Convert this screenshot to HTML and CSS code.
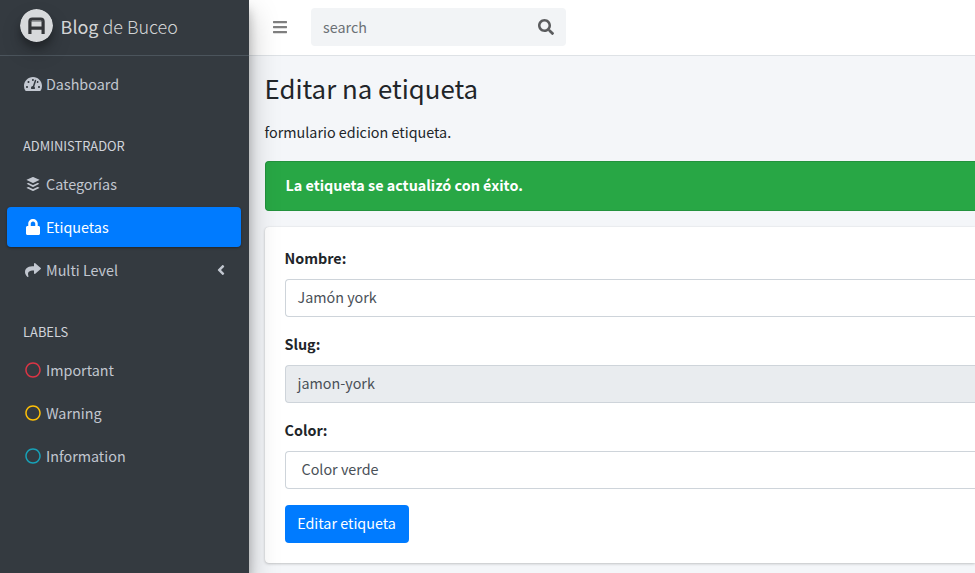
FILE: index.html
```html
<!DOCTYPE html>
<html lang="es">
<head>
<meta charset="utf-8">
<title>Blog de Buceo</title>
<link rel="stylesheet" href="styles.css">
</head>
<body>
<div class="wrapper">
  <aside class="sidebar">
    <a class="brand">
      <svg class="brand-logo" viewBox="0 0 33 33"><circle cx="16.5" cy="16.5" r="16.5" fill="#d7d9db"/><path d="M9.9 24.9V12.4q0-2.4 2.4-2.4h8.4q2.4 0 2.4 2.4v12.5M9.900 19.100h13.200" fill="none" stroke="#343639" stroke-width="3.2"/><path d="M10 12.2h13" stroke="#55585b" stroke-width=".7"/></svg>
      <span class="brand-text"><b>Blog</b> de Buceo</span>
    </a>
    <nav class="nav">
      <a class="nav-link"><svg class="icon" viewBox="0 0 576 512"><path d="M288 32C128.94 32 0 160.94 0 320c0 52.8 14.25 102.26 39.06 144.8 5.61 9.62 16.3 15.2 27.44 15.2h443c11.14 0 21.83-5.58 27.44-15.2C561.75 422.26 576 372.8 576 320c0-159.06-128.94-288-288-288zm0 64c14.71 0 26.58 10.13 30.32 23.65-1.11 2.26-2.64 4.23-3.45 6.67l-9.22 27.67c-5.13 3.49-10.97 6.01-17.64 6.01-17.67 0-32-14.33-32-32S270.33 96 288 96zM96 384c-17.67 0-32-14.33-32-32s14.33-32 32-32 32 14.33 32 32-14.33 32-32 32zm48-160c-17.67 0-32-14.33-32-32s14.33-32 32-32 32 14.33 32 32-14.33 32-32 32zm246.77-72.41l-61.33 184C343.13 347.33 352 364.54 352 384c0 11.72-3.38 22.55-8.88 32H232.88c-5.5-9.45-8.88-20.28-8.88-32 0-33.94 26.5-61.43 59.9-63.59l61.34-184.01c4.17-12.56 17.73-19.45 30.36-15.17 12.57 4.19 19.35 17.79 15.17 30.36zm14.66 57.2l15.52-46.55c3.47-1.29 7.13-2.23 11.05-2.23 17.67 0 32 14.33 32 32s-14.33 32-32 32c-11.38-.01-20.89-6.28-26.57-15.22zM480 384c-17.67 0-32-14.33-32-32s14.33-32 32-32 32 14.33 32 32-14.33 32-32 32z"/></svg><span>Dashboard</span></a>
      <div class="nav-header">ADMINISTRADOR</div>
      <a class="nav-link"><svg class="icon" viewBox="0 0 448 512"><path d="M427.84 380.67l-196.5 97.82a18.6 18.6 0 0 1-14.67 0L20.16 380.67c-4-2-4-5.28 0-7.29L67.22 350a18.65 18.65 0 0 1 14.69 0l134.76 67a18.51 18.51 0 0 0 14.67 0l134.76-67a18.62 18.62 0 0 1 14.68 0l47.06 23.43c4.05 1.96 4.05 5.24 0 7.24zm0-136.53l-47.06-23.43a18.62 18.62 0 0 0-14.68 0l-134.76 67.08a18.68 18.68 0 0 1-14.67 0L81.91 220.71a18.65 18.65 0 0 0-14.69 0l-47.06 23.43c-4 2-4 5.29 0 7.31l196.51 97.8a18.6 18.6 0 0 0 14.67 0l196.5-97.8c4.05-2.02 4.05-5.3 0-7.31zM20.16 130.42l196.5 90.29a20.08 20.08 0 0 0 14.67 0l196.51-90.29c4-1.86 4-4.89 0-6.74L231.33 33.4a19.88 19.88 0 0 0-14.67 0l-196.5 90.28c-4.05 1.85-4.05 4.88 0 6.74z"/></svg><span>Categorías</span></a>
      <a class="nav-link active"><svg class="icon" viewBox="0 0 448 512"><path d="M400 224h-24v-72C376 68.2 307.8 0 224 0S72 68.2 72 152v72H48c-26.5 0-48 21.5-48 48v192c0 26.5 21.5 48 48 48h352c26.5 0 48-21.5 48-48V272c0-26.5-21.5-48-48-48zm-104 0H152v-72c0-39.7 32.3-72 72-72s72 32.3 72 72v72z"/></svg><span>Etiquetas</span></a>
      <a class="nav-link"><svg class="icon" viewBox="0 0 512 512"><path d="M503.691 189.836L327.687 37.851C312.281 24.546 288 35.347 288 56.015v80.053C127.371 137.907 0 170.1 0 322.326c0 61.441 39.581 122.309 83.333 154.132 13.653 9.931 33.111-2.533 28.077-18.631C66.066 312.814 132.917 274.316 288 272.085V360c0 20.7 24.3 31.453 39.687 18.164l176.004-152c11.071-9.562 11.086-26.753 0-36.328z"/></svg><span>Multi Level</span><svg class="caret" viewBox="0 0 256 512"><path d="M31.7 239l136-136c9.4-9.4 24.6-9.4 33.9 0l22.600 22.600c9.400 9.400 9.400 24.600 0 33.900L127.900 256l96.400 96.400c9.400 9.400 9.400 24.600 0 33.900L201.700 409c-9.400 9.400-24.600 9.400-33.900 0l-136-136c-9.500-9.400-9.500-24.600-.1-34z"/></svg></a>
      <div class="nav-header">LABELS</div>
      <a class="nav-link"><svg class="icon danger" viewBox="0 0 512 512"><path d="M256 8C119 8 8 119 8 256s111 248 248 248 248-111 248-248S393 8 256 8zm0 448c-110.500 0-200-89.500-200-200S145.500 56 256 56s200 89.500 200 200-89.500 200-200 200z"/></svg><span>Important</span></a>
      <a class="nav-link"><svg class="icon warning" viewBox="0 0 512 512"><path d="M256 8C119 8 8 119 8 256s111 248 248 248 248-111 248-248S393 8 256 8zm0 448c-110.500 0-200-89.500-200-200S145.500 56 256 56s200 89.500 200 200-89.500 200-200 200z"/></svg><span>Warning</span></a>
      <a class="nav-link"><svg class="icon info" viewBox="0 0 512 512"><path d="M256 8C119 8 8 119 8 256s111 248 248 248 248-111 248-248S393 8 256 8zm0 448c-110.500 0-200-89.500-200-200S145.500 56 256 56s200 89.500 200 200-89.500 200-200 200z"/></svg><span>Information</span></a>
    </nav>
  </aside>
  <div class="main">
    <header class="navbar">
      <svg class="bars" viewBox="0 0 448 512"><path d="M16 132h416c8.837 0 16-7.163 16-16V76c0-8.837-7.163-16-16-16H16C7.163 60 0 67.163 0 76v40c0 8.837 7.163 16 16 16zm0 160h416c8.837 0 16-7.163 16-16v-40c0-8.837-7.163-16-16-16H16c-8.837 0-16 7.163-16 16v40c0 8.837 7.163 16 16 16zm0 160h416c8.837 0 16-7.163 16-16v-40c0-8.837-7.163-16-16-16H16c-8.837 0-16 7.163-16 16v40c0 8.837 7.163 16 16 16z"/></svg>
      <div class="search"><span>search</span><svg viewBox="0 0 512 512"><path d="M505 442.700L405.300 343c-4.500-4.500-10.600-7-17-7H372c27.600-35.300 44-79.700 44-128C416 93.100 322.900 0 208 0S0 93.100 0 208s93.100 208 208 208c48.300 0 92.700-16.400 128-44v16.300c0 6.400 2.500 12.500 7 17l99.700 99.700c9.400 9.400 24.600 9.400 33.900 0l28.300-28.300c9.400-9.400 9.400-24.600.1-34zM208 336c-70.700 0-128-57.200-128-128 0-70.700 57.200-128 128-128 70.700 0 128 57.200 128 128 0 70.700-57.200 128-128 128z"/></svg></div>
    </header>
    <main class="content">
      <h1>Editar na etiqueta</h1>
      <p>formulario edicion etiqueta.</p>
      <div class="alert"><strong>La etiqueta se actualizó con éxito.</strong></div>
      <form class="card">
        <label>Nombre:</label>
        <div class="control">Jamón york</div>
        <label>Slug:</label>
        <div class="control readonly">jamon-york</div>
        <label>Color:</label>
        <div class="control select">Color verde</div>
        <button class="btn" type="button">Editar etiqueta</button>
      </form>
    </main>
  </div>
</div>
</body>
</html>
```
FILE: styles.css
```css
* { box-sizing: border-box; }
body {
  margin: 0;
  overflow: hidden;
  font: 400 14.35px/24px "Source Sans Pro", "Noto Sans CJK SC", sans-serif;
  color: #212529;
  background: #f4f6f9;
}
svg { display: block; fill: currentColor; flex: none; }
.wrapper { display: flex; height: 573px; }
.sidebar {
  position: relative;
  z-index: 2;
  flex: none;
  width: 249px;
  background: #343a40;
  color: #c2c7d0;
  box-shadow: 0 14px 28px rgba(0,0,0,.25), 0 10px 10px rgba(0,0,0,.22);
}
.brand {
  display: flex;
  align-items: center;
  gap: 7.6px;
  height: 56px;
  padding: 0 8px 4px 20px;
  border-bottom: 1px solid #4b545c;
  font-size: 17.95px;
  font-weight: 300;
  color: rgba(255,255,255,.8);
}
.brand-logo {
  width: 33px;
  height: 33px;
  border-radius: 50%;
  box-shadow: 0 10px 20px rgba(0,0,0,.19), 0 6px 6px rgba(0,0,0,.23);
}
.brand-text { padding-top: 1px; white-space: nowrap; }
.brand b { font-weight: 400; }
.nav { padding: 8px 8px 0 7px; }
.nav-link {
  display: flex;
  align-items: center;
  height: 40px;
  margin-bottom: 3px;
  padding: 0 16px;
  border-radius: 4px;
}
.nav-link span { margin-left: 3px; }
.active {
  background: #007bff;
  color: #fff;
  box-shadow: 0 1px 3px rgba(0,0,0,.12), 0 1px 2px rgba(0,0,0,.24);
}
.icon { width: 20px; height: 16px; }
.caret { width: 8px; height: 16px; margin-left: auto; }
.danger { color: #dc3545; }
.warning { color: #ffc107; }
.info { color: #17a2b8; }
.nav-header {
  height: 57px;
  padding: 28px 16px 8px;
  font-size: 12.9px;
  line-height: 21px;
  color: #d0d4db;
}
.main { flex: 1; min-width: 0; }
.navbar {
  display: flex;
  align-items: center;
  gap: 24px;
  height: 56px;
  padding: 0 24px 1px;
  background: #fff;
  border-bottom: 1px solid #dee2e6;
}
.bars { width: 14px; height: 16px; color: #7f7f7f; }
.search {
  display: flex;
  align-items: center;
  justify-content: space-between;
  width: 255px;
  height: 38px;
  padding: 0 12px;
  border-radius: 4px;
  background: #f2f4f6;
  color: #6b7075;
}
.search svg { width: 16px; height: 16px; color: #5b5c5e; }
.content { padding: 14px 0 15px 16px; }
h1 { margin: 0 0 15px -.5px; font-size: 25.8px; line-height: 35px; font-weight: 400; }
p { margin: 0 0 17px -.5px; }
.alert {
  height: 50px;
  margin-bottom: 16px;
  padding: 11px 19.5px;
  border: 1px solid #23923d;
  border-right: 0;
  border-radius: 4px 0 0 4px;
  background: #28a745;
  color: #fff;
}
.card {
  height: 336px;
  padding: 19px 0 20px 20px;
  border-radius: 4px 0 0 4px;
  background: #fff;
  box-shadow: 0 0 1px rgba(0,0,0,.125), 0 1px 3px rgba(0,0,0,.2);
}
label { display: block; margin: 0 0 9px -.5px; font-weight: 700; }
.control {
  height: 38px;
  margin-bottom: 15px;
  padding: 5px 11.5px;
  border: 1px solid #ced4da;
  border-right: 0;
  border-radius: 4px 0 0 4px;
  color: #495057;
}
.readonly { background: #e9ecef; }
.select { margin-bottom: 16px; padding-left: 15.5px; }
.btn {
  display: block;
  width: 124px;
  height: 38px;
  padding: 0 1px 2px 0;
  border: 0;
  border-radius: 4px;
  background: #007bff;
  color: #fff;
  font: inherit;
}
```
